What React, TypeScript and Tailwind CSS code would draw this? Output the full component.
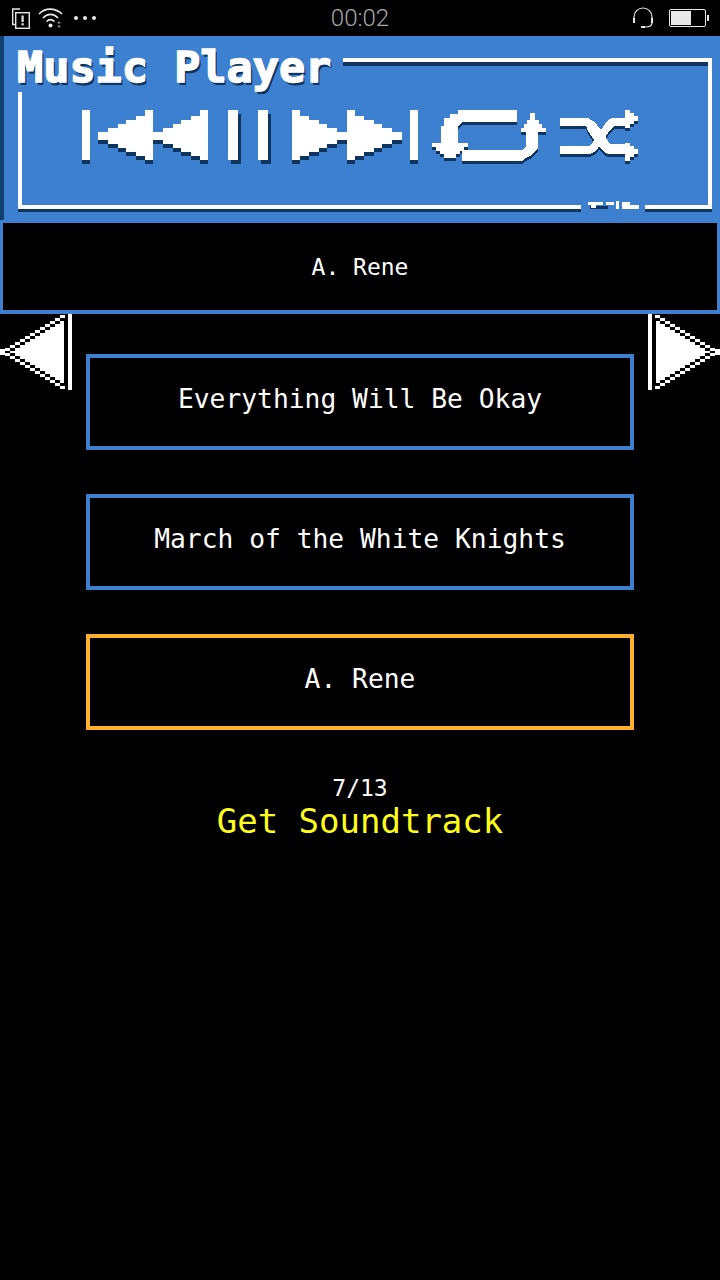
import React from "react";

const SHADE = "#0e3560";

const mono = "font-['DejaVu_Sans_Mono',monospace]";

// Each pixel drawing is drawn twice: a dark copy underneath, then the white one
const Pixel = ({ w, h, dx = 0, dy = 4, children }: { w: number; h: number; dx?: number; dy?: number; children: React.ReactNode }) => (
  <svg width={w} height={h} viewBox={`0 0 ${w} ${h}`} shapeRendering="crispEdges" className="block shrink-0">
    <g fill={SHADE} transform={`translate(${dx} ${dy})`}>{children}</g>
    <g fill="#fff">{children}</g>
  </svg>
);

const leftTri = (x: number) =>
  `${x + 55},0 ${x + 55},50 ${x + 47},50 ${x + 47},46 ${x + 38},46 ${x + 38},42 ${x + 28},42 ${x + 28},38 ${x + 20},38 ${x + 20},34 ${x + 10},34 ${x + 10},30 ${x},30 ${x},22 ${x + 10},22 ${x + 10},18 ${x + 20},18 ${x + 20},14 ${x + 28},14 ${x + 28},10 ${x + 38},10 ${x + 38},6 ${x + 47},6 ${x + 47},0`;

const SkipBack = () => (
  <Pixel w={126} h={54}>
    <rect x={0} y={0} width={8} height={50} />
    <polygon points={leftTri(16)} />
    <polygon points={leftTri(71)} />
  </Pixel>
);

const SkipForward = () => (
  <Pixel w={126} h={54}>
    <g transform="translate(126 0) scale(-1 1)">
      <rect x={0} y={0} width={8} height={50} />
      <polygon points={leftTri(16)} />
      <polygon points={leftTri(71)} />
    </g>
  </Pixel>
);

const Pause = () => (
  <Pixel w={43} h={54} dx={3}>
    <rect x={0} y={0} width={10} height={50} />
    <rect x={30} y={0} width={10} height={50} />
  </Pixel>
);

const Repeat = () => (
  <Pixel w={114} h={54} dy={3}>
    <polygon points="26,0 85,0 85,12 30,12 26,16 26,33 36,33 36,37 32,37 32,41 28,41 28,44 24,44 24,48 12,48 12,44 8,44 8,41 4,41 4,37 0,37 0,33 9,33 9,16 12,16 12,8 18,8 18,4 26,4" />
    <polygon points="30,40 90,40 94,36 94,22 89,22 89,18 92,18 92,14 95,14 95,10 98,10 98,3 103,3 103,10 107,10 107,14 110,14 110,18 114,18 114,22 106,22 106,38 102,42 98,46 94,48 90,51 30,51" />
  </Pixel>
);

const Shuffle = () => (
  <Pixel w={78} h={54} dy={3}>
    <polygon points="0,8 28,8 33,11 37,15 41,20 46,28 50,34 65,34 65,33 70,33 70,36 74,36 74,39 78,39 78,44 74,44 74,47 70,47 70,51 65,51 65,44 48,44 44,42 40,38 36,33 32,27 28,21 26,16 0,16" />
    <polygon points="0,36 30,36 33,32 37,26 41,20 45,14 49,9 52,8 65,8 65,0 70,0 70,3 74,3 74,6 78,6 78,11 74,11 74,14 70,14 70,18 65,18 65,16 54,16 50,20 46,26 42,32 38,38 34,42 30,44 0,44" />
  </Pixel>
);

// arrow with the checkered edge, drawn pointing left
const Arrow = ({ flip }: { flip?: boolean }) => {
  const rows: React.ReactNode[] = [];
  for (let i = 0; i < 12; i++) {
    const x = 60 - 5 * i;
    const top = 1 + 3 * i;
    const bottom = 72 - 3 * i;
    [top, bottom].forEach((y, n) => {
      rows.push(<rect key={`w${i}${n}`} x={x} y={y} width={5} height={3} fill="#fff" />);
      rows.push(<rect key={`i${i}${n}`} x={x + 10} y={y} width={Math.max(64 - x - 10, 0)} height={3} fill="#fff" />);
    });
  }
  return (
    <svg width={72} height={76} viewBox="0 0 72 76" shapeRendering="crispEdges" className={`block shrink-0 ${flip ? "-scale-x-100" : ""}`}>
      {rows}
      <rect x={0} y={35} width={5} height={6} fill="#fff" />
      <rect x={10} y={37} width={54} height={2} fill="#fff" />
      <rect x={68} y={0} width={4} height={76} fill="#fff" />
    </svg>
  );
};

const StatusBar = () => (
  <div className="h-9 bg-black flex items-center justify-between pl-[11px] pr-[11px] relative">
    <div className="flex items-center">
      <svg width={19} height={21} viewBox="0 0 19 21" fill="none" stroke="#e8e8e8" strokeWidth={1.4}>
        <path d="M9 1H1.7v15.5H4.5" />
        <rect x={4.7} y={4.7} width={13.6} height={15.6} />
        <rect x={10.5} y={7.5} width={2.2} height={6.5} fill="#e8e8e8" stroke="none" />
        <rect x={10.5} y={15.2} width={2.2} height={2.2} fill="#e8e8e8" stroke="none" />
      </svg>
      <svg width={26} height={22} viewBox="0 0 26 22" fill="none" stroke="#e8e8e8" strokeWidth={1.7} className="ml-[8px]">
        <path d="M1 7C7 0.5 17 0.5 24 7" />
        <path d="M5 11C9.5 6.2 15.5 6.2 20 11" />
        <path d="M8.5 14.5c2.5-2.4 5.5-2.4 8 0" />
        <circle cx={12.5} cy={18.5} r={2} fill="#e8e8e8" stroke="none" />
        <path d="M21 14l-2 2.6h4zM21 21l-2-2.6h4z" fill="#8f8f8f" stroke="none" />
      </svg>
      <div className="flex gap-[5px] ml-[10px]">
        <span className="w-1 h-1 rounded-full bg-[#e8e8e8]" />
        <span className="w-1 h-1 rounded-full bg-[#e8e8e8]" />
        <span className="w-1 h-1 rounded-full bg-[#e8e8e8]" />
      </div>
    </div>
    <span className="absolute left-0 right-0 text-center text-[24px] leading-9 font-light font-['Roboto',sans-serif] text-[#a8a8a8]">
      00:02
    </span>
    <div className="flex items-center">
      <svg width={22} height={22} viewBox="0 0 22 22" fill="none" stroke="#e8e8e8" strokeWidth={1.2}>
        <path d="M2 13V10a9 9 0 0 1 18 0v3" />
        <path d="M2 11v5M20 11v5" strokeWidth={2} />
        <path d="M20 16c0 3-3 4-7 4" />
        <path d="M9 20h4" strokeWidth={2} />
      </svg>
      <div className="ml-[15px] w-[37px] h-[18px] border border-[#e8e8e8] rounded-[2px] p-[1px]">
        <div className="w-[20px] h-full bg-[#e8e8e8]" />
      </div>
      <div className="w-[2px] h-[6px] bg-[#e8e8e8] ml-[1px]" />
    </div>
  </div>
);

const SongButton = ({ title, active }: { title: string; active?: boolean }) => (
  <div
    className={`w-[548px] h-24 border-4 flex items-center justify-center pb-[4px] text-[26.3px] text-white ${
      active ? "border-[#fcb131]" : "border-[#3d80cf]"
    }`}
  >
    {title}
  </div>
);

export default function App() {
  return (
    <div className={`w-[720px] h-[1280px] bg-black overflow-hidden ${mono}`}>
      <StatusBar />

      <div className="relative h-[184px] bg-[#3d80cf] border-l-4 border-[#123f70]">
        <div className="flex items-start pl-[13px] pr-[8px] pt-[7px]">
          <span className="text-[43.5px] leading-[48px] font-bold text-white whitespace-pre [text-shadow:2px_3px_0_#0e3560] [-webkit-text-stroke:1.5px_white]">
            Music Player
          </span>
          <div className="flex-1 ml-[12px] mt-[15px] h-[8px] border-t-4 border-t-white border-b-4 border-b-[#0e3560]" />
        </div>
        {/* rest of the frame round the buttons */}
        <div className="absolute left-[704px] top-[22px] w-1 h-[36px] bg-white" />
        <div className="absolute left-[14px] top-[56px] w-[694px] h-[117px] border-l-4 border-b-4 border-r-4 border-white shadow-[0_3px_0_#0e3560]" />
        <div className="absolute left-[577px] top-[164px] w-[64px] h-[14px] bg-[#3d80cf]">
          <svg width={64} height={14} viewBox="0 0 64 14" shapeRendering="crispEdges" className="block">
            <g fill={SHADE}>
              <rect x={9} y={6} width={18} height={3} />
              <rect x={42} y={6} width={16} height={3} />
            </g>
            <g fill="#fff">
              <rect x={7} y={2} width={15} height={3} />
              <rect x={10} y={5} width={5} height={3} />
              <rect x={25} y={2} width={8} height={3} />
              <rect x={35} y={1} width={3} height={8} />
              <rect x={41} y={2} width={8} height={3} />
              <rect x={41} y={5} width={17} height={4} />
            </g>
          </svg>
        </div>
        <div className="absolute left-[78px] top-[74px] flex items-start">
          <SkipBack />
          <div className="ml-5">
            <Pause />
          </div>
          <div className="ml-[21px]">
            <SkipForward />
          </div>
          <div className="ml-[14px]">
            <Repeat />
          </div>
          <div className="ml-[14px]">
            <Shuffle />
          </div>
        </div>
      </div>

      <div className="h-[94px] bg-black border-x-[3px] border-t-[3px] border-b-4 border-[#3d80cf] flex items-center justify-center pt-[2px] text-[23px] text-white">
        A. Rene
      </div>

      <div className="flex justify-between">
        <Arrow />
        <Arrow flip />
      </div>

      <div className="flex flex-col items-center gap-[44px] -mt-[36px]">
        <SongButton title="Everything Will Be Okay" />
        <SongButton title="March of the White Knights" />
        <SongButton title="A. Rene" active />
      </div>

      <div className="flex flex-col items-center mt-[44px]">
        <span className="text-[23px] leading-[28px] text-white">7/13</span>
        <span className="text-[34px] leading-[38px] text-[#ffff1a]">Get Soundtrack</span>
      </div>
    </div>
  );
}
